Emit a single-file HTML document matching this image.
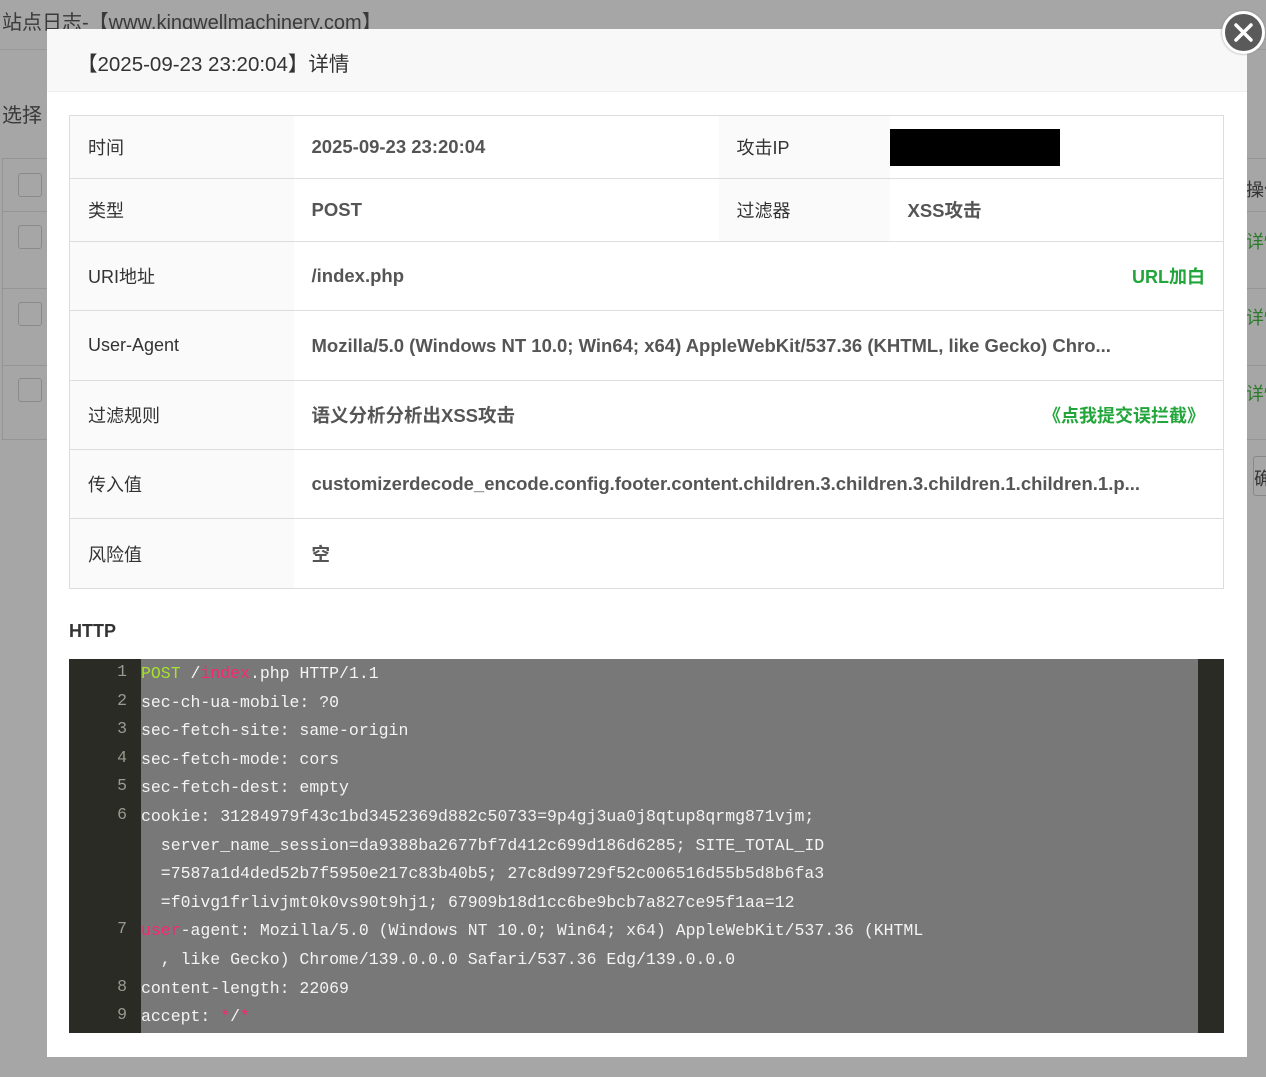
<!DOCTYPE html>
<html><head><meta charset="utf-8"><style>
*{margin:0;padding:0;box-sizing:border-box}
body{width:1266px;height:1077px;overflow:hidden;position:relative;background:#a4a4a4;font-family:"Liberation Sans","Noto Sans CJK SC",sans-serif;color:#333}
.bg{position:absolute;inset:0;background:#a6a6a6}
.bgtitle{position:absolute;left:2px;top:6px;font-size:20px;color:#3a3a3a}
.bgline{position:absolute;left:0;right:0;top:49px;border-top:1px solid #999}
.bgsel{position:absolute;left:2px;top:99px;font-size:20px;color:#3a3a3a}
.bgtable{position:absolute;left:2px;top:158px;width:1300px;height:282px;border:1px solid #959595}
.bgrow{position:absolute;left:0;right:0;border-top:1px solid #959595}
.cb{position:absolute;left:15px;width:24px;height:24px;border:1px solid #8a8a8a;border-radius:3px}
.bgr{position:absolute;left:1246px;font-size:18px;color:#2a7a2a;white-space:nowrap}
.modal{position:absolute;left:47px;top:29px;width:1200px;height:1028px;background:#fff}
.mh{height:63px;background:#f8f8f8;border-bottom:1px solid #eee;font-size:20.5px;color:#333;padding:18px 0 0 30px}
table{position:absolute;left:22px;top:86px;width:1155px;border-collapse:collapse;border:1px solid #ddd;table-layout:fixed}
td{border-top:1px solid #ddd;font-size:18px;padding:0 18px;vertical-align:middle;white-space:nowrap;overflow:hidden}
td.l{background:#fafafa;color:#333}
td.v{font-weight:bold;color:#555;font-size:18.5px}
.g{color:#22a53a;font-weight:bold;text-align:right}
.http{position:absolute;left:22px;top:592px;font-size:18px;font-weight:bold;color:#333}
.code{position:absolute;left:22px;top:630px;width:1155px;height:374px;background:#2b2b25;overflow:hidden}
.gut{position:absolute;left:0;top:0;width:72px;height:100%;background:#2b2b25}
.txt{position:absolute;left:72px;top:0;width:1057px;height:100%;background:#787878}
pre{position:absolute;left:72px;top:1px;font-family:"Liberation Mono",monospace;font-size:16.5px;line-height:28.6px;color:#f4f4f4;white-space:pre}
.nums{position:absolute;left:0;top:-1px;width:58px;text-align:right;font-family:"Liberation Mono",monospace;font-size:16.5px;line-height:28.6px;color:#9a9a90;white-space:pre}
.k{color:#a6e22e}.r{color:#f92672}
.close{position:absolute;left:1222px;top:11px;width:43px;height:43px;border-radius:50%;background:#5a5a5a;border:3px solid #fff;box-shadow:0 0 2px #888}
</style></head><body>
<div class="bg"></div>
<div class="bgtitle">站点日志-【www.kingwellmachinery.com】</div>
<div class="bgline"></div>
<div class="bgsel">选择</div>
<div class="bgtable">
<div class="bgrow" style="top:52px"></div><div class="bgrow" style="top:129px"></div><div class="bgrow" style="top:206px"></div>
<div class="cb" style="top:14px"></div><div class="cb" style="top:66px"></div><div class="cb" style="top:143px"></div><div class="cb" style="top:219px"></div>
</div>
<div class="bgr" style="top:176px;color:#333">操作</div>
<div class="bgr" style="top:228px">详情</div>
<div class="bgr" style="top:304px">详情</div>
<div class="bgr" style="top:380px">详情</div>
<div style="position:absolute;left:1253px;top:456px;width:20px;height:40px;border:1px solid #888;border-radius:3px;font-size:18px;padding-top:8px">确</div>
<div class="modal">
<div class="mh">【2025-09-23 23:20:04】详情</div>
<table>
<colgroup><col style="width:224px"><col style="width:425px"><col style="width:171px"><col></colgroup>
<tr style="height:63px"><td class="l">时间</td><td class="v">2025-09-23 23:20:04</td><td class="l">攻击IP</td><td style="padding:0"><div style="width:170px;height:37px;background:#000"></div></td></tr>
<tr style="height:63px"><td class="l">类型</td><td class="v">POST</td><td class="l">过滤器</td><td class="v">XSS攻击</td></tr>
<tr style="height:69px"><td class="l">URI地址</td><td class="v" colspan="2">/index.php</td><td class="g">URL加白</td></tr>
<tr style="height:70px"><td class="l">User-Agent</td><td class="v" colspan="3">Mozilla/5.0 (Windows NT 10.0; Win64; x64) AppleWebKit/537.36 (KHTML, like Gecko) Chro...</td></tr>
<tr style="height:69px"><td class="l">过滤规则</td><td class="v" colspan="2">语义分析分析出XSS攻击</td><td class="g">《点我提交误拦截》</td></tr>
<tr style="height:69px"><td class="l">传入值</td><td class="v" colspan="3">customizerdecode_encode.config.footer.content.children.3.children.3.children.1.children.1.p...</td></tr>
<tr style="height:70px"><td class="l">风险值</td><td class="v" colspan="3">空</td></tr>
</table>
<div class="http">HTTP</div>
<div class="code"><div class="gut"></div><div class="txt"></div>
<div class="nums">1
2
3
4
5
6



7

8
9</div>
<pre><span class="k">POST</span> /<span class="r">index</span>.php HTTP/1.1
sec-ch-ua-mobile: ?0
sec-fetch-site: same-origin
sec-fetch-mode: cors
sec-fetch-dest: empty
cookie: 31284979f43c1bd3452369d882c50733=9p4gj3ua0j8qtup8qrmg871vjm;
  server_name_session=da9388ba2677bf7d412c699d186d6285; SITE_TOTAL_ID
  =7587a1d4ded52b7f5950e217c83b40b5; 27c8d99729f52c006516d55b5d8b6fa3
  =f0ivg1frlivjmt0k0vs90t9hj1; 67909b18d1cc6be9bcb7a827ce95f1aa=12
<span class="r">user</span>-agent: Mozilla/5.0 (Windows NT 10.0; Win64; x64) AppleWebKit/537.36 (KHTML
  , like Gecko) Chrome/139.0.0.0 Safari/537.36 Edg/139.0.0.0
content-length: 22069
accept: <span class="r">*</span>/<span class="r">*</span></pre>
</div>
</div>
<div class="close"><svg width="37" height="37" viewBox="0 0 37 37"><path d="M11 11L26 26M26 11L11 26" stroke="#fff" stroke-width="3.5" stroke-linecap="round"/></svg></div>
</body></html>
